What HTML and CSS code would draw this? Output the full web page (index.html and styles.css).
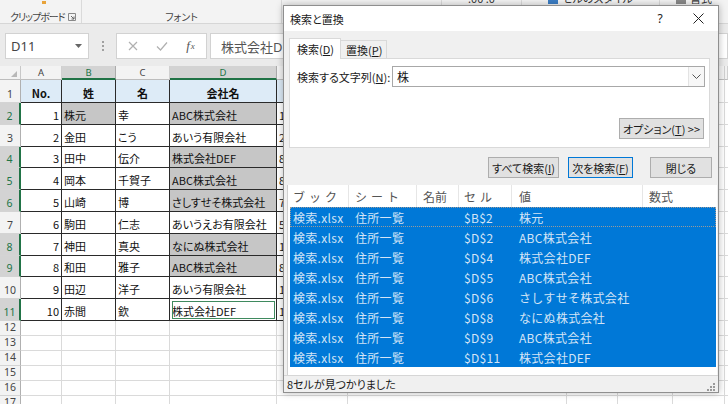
FILE: index.html
```html
<!DOCTYPE html>
<html lang="ja">
<head>
<meta charset="utf-8">
<title>検索と置換</title>
<link rel="stylesheet" href="styles.css">
</head>
<body>
<div class="app">
  <div class="ribbon">
    <div class="grp g-clip">
      <div class="cut-top"><span class="orange"></span></div>
      <div class="lbl-row"><span class="lbl narrow">クリップボード</span>
        <svg class="launch" width="8" height="8" viewBox="0 0 8 8"><path d="M0.5 0.5H7.5V7.5H0.5Z" fill="none" stroke="#888" stroke-width="1"/><path d="M3 3L6 6M6 3.5V6H3.5" fill="none" stroke="#666" stroke-width="1"/></svg>
      </div>
    </div>
    <div class="grp g-font"><div class="cut-top"></div><span class="lbl">フォント</span></div>
    <div class="grp g-align"><div class="cut-top"></div></div>
    <div class="grp g-num"><div class="cut-top cut-txt">.00 .0</div></div>
    <div class="grp g-style"><div class="cut-top cut-txt"><span class="blue-ico"></span>セルのスタイル</div></div>
    <div class="grp g-cells"><div class="cut-top cut-txt"><span class="gray-ico"></span>書式</div></div>
  </div>

  <div class="fbar">
    <div class="namebox"><span>D11</span>
      <svg width="7" height="4" viewBox="0 0 7 4"><path d="M0 0H7L3.5 4Z" fill="#666"/></svg>
    </div>
    <div class="dots"><i></i><i></i><i></i></div>
    <div class="fxbox">
      <span class="fxi"><svg width="10" height="10" viewBox="0 0 10 10"><path d="M1 1L9 9M9 1L1 9" stroke="#b0b0b0" stroke-width="1.2"/></svg></span>
      <span class="fxi"><svg width="12" height="10" viewBox="0 0 12 10"><path d="M1 5.5L4.5 9L11 1.5" stroke="#b0b0b0" stroke-width="1.2" fill="none"/></svg></span>
      <span class="fxi fx"><i>f</i><small>x</small></span>
    </div>
    <div class="finput">株式会社DEF</div>
  </div>

  <div class="sheet">
    <div class="row colhdr">
      <div class="corner w0"><svg width="6" height="6" viewBox="0 0 6 6"><path d="M6 0V6H0Z" fill="#b8b8b8"/></svg></div>
      <div class="chc wa">A</div>
      <div class="chc wb sel">B</div>
      <div class="chc wc">C</div>
      <div class="chc wd sel">D</div>
      <div class="chc we"></div>
      <div class="chc wf"></div>
      <div class="chc wg"></div>
      <div class="chc wh"></div>
      <div class="chc wi"></div>
      <div class="chc wj"></div>
    </div>

    <div class="row r1">
      <div class="rh w0">1</div>
      <div class="c wa d hd">No.</div>
      <div class="c wb d hd">姓</div>
      <div class="c wc d hd">名</div>
      <div class="c wd d hd">会社名</div>
      <div class="c we d hd"></div>
      <div class="c wf"></div><div class="c wg"></div><div class="c wh"></div><div class="c wi"></div><div class="c wj"></div>
    </div>
    <div class="row rd">
      <div class="rh w0 on">2</div>
      <div class="c wa d num">1</div>
      <div class="c wb d g">株元</div>
      <div class="c wc d">幸</div>
      <div class="c wd d g">ABC株式会社</div>
      <div class="c we d">1</div>
      <div class="c wf"></div><div class="c wg"></div><div class="c wh"></div><div class="c wi"></div><div class="c wj"></div>
    </div>
    <div class="row rd">
      <div class="rh w0">3</div>
      <div class="c wa d num">2</div>
      <div class="c wb d">金田</div>
      <div class="c wc d">こう</div>
      <div class="c wd d">あいう有限会社</div>
      <div class="c we d">2</div>
      <div class="c wf"></div><div class="c wg"></div><div class="c wh"></div><div class="c wi"></div><div class="c wj"></div>
    </div>
    <div class="row rd">
      <div class="rh w0 on">4</div>
      <div class="c wa d num">3</div>
      <div class="c wb d">田中</div>
      <div class="c wc d">伝介</div>
      <div class="c wd d g">株式会社DEF</div>
      <div class="c we d">8</div>
      <div class="c wf"></div><div class="c wg"></div><div class="c wh"></div><div class="c wi"></div><div class="c wj"></div>
    </div>
    <div class="row rd">
      <div class="rh w0 on">5</div>
      <div class="c wa d num">4</div>
      <div class="c wb d">岡本</div>
      <div class="c wc d">千賀子</div>
      <div class="c wd d g">ABC株式会社</div>
      <div class="c we d">8</div>
      <div class="c wf"></div><div class="c wg"></div><div class="c wh"></div><div class="c wi"></div><div class="c wj"></div>
    </div>
    <div class="row rd">
      <div class="rh w0 on">6</div>
      <div class="c wa d num">5</div>
      <div class="c wb d">山崎</div>
      <div class="c wc d">博</div>
      <div class="c wd d g">さしすせそ株式会社</div>
      <div class="c we d">7</div>
      <div class="c wf"></div><div class="c wg"></div><div class="c wh"></div><div class="c wi"></div><div class="c wj"></div>
    </div>
    <div class="row rd">
      <div class="rh w0">7</div>
      <div class="c wa d num">6</div>
      <div class="c wb d">駒田</div>
      <div class="c wc d">仁志</div>
      <div class="c wd d">あいうえお有限会社</div>
      <div class="c we d">5</div>
      <div class="c wf"></div><div class="c wg"></div><div class="c wh"></div><div class="c wi"></div><div class="c wj"></div>
    </div>
    <div class="row rd">
      <div class="rh w0 on">8</div>
      <div class="c wa d num">7</div>
      <div class="c wb d">神田</div>
      <div class="c wc d">真央</div>
      <div class="c wd d g">なにぬ株式会社</div>
      <div class="c we d">1</div>
      <div class="c wf"></div><div class="c wg"></div><div class="c wh"></div><div class="c wi"></div><div class="c wj"></div>
    </div>
    <div class="row rd">
      <div class="rh w0 on">9</div>
      <div class="c wa d num">8</div>
      <div class="c wb d">和田</div>
      <div class="c wc d">雅子</div>
      <div class="c wd d g">ABC株式会社</div>
      <div class="c we d">8</div>
      <div class="c wf"></div><div class="c wg"></div><div class="c wh"></div><div class="c wi"></div><div class="c wj"></div>
    </div>
    <div class="row rd">
      <div class="rh w0">10</div>
      <div class="c wa d num">9</div>
      <div class="c wb d">田辺</div>
      <div class="c wc d">洋子</div>
      <div class="c wd d">あいう有限会社</div>
      <div class="c we d">1</div>
      <div class="c wf"></div><div class="c wg"></div><div class="c wh"></div><div class="c wi"></div><div class="c wj"></div>
    </div>
    <div class="row rd">
      <div class="rh w0 on">11</div>
      <div class="c wa d num">10</div>
      <div class="c wb d">赤間</div>
      <div class="c wc d">欽</div>
      <div class="c wd d act">株式会社DEF</div>
      <div class="c we d">1</div>
      <div class="c wf"></div><div class="c wg"></div><div class="c wh"></div><div class="c wi"></div><div class="c wj"></div>
    </div>
    <div class="row re"><div class="rh w0">12</div><div class="c wa"></div><div class="c wb"></div><div class="c wc"></div><div class="c wd"></div><div class="c we"></div><div class="c wf"></div><div class="c wg"></div><div class="c wh"></div><div class="c wi"></div><div class="c wj"></div></div>
    <div class="row re"><div class="rh w0">13</div><div class="c wa"></div><div class="c wb"></div><div class="c wc"></div><div class="c wd"></div><div class="c we"></div><div class="c wf"></div><div class="c wg"></div><div class="c wh"></div><div class="c wi"></div><div class="c wj"></div></div>
    <div class="row re"><div class="rh w0">14</div><div class="c wa"></div><div class="c wb"></div><div class="c wc"></div><div class="c wd"></div><div class="c we"></div><div class="c wf"></div><div class="c wg"></div><div class="c wh"></div><div class="c wi"></div><div class="c wj"></div></div>
    <div class="row re"><div class="rh w0">15</div><div class="c wa"></div><div class="c wb"></div><div class="c wc"></div><div class="c wd"></div><div class="c we"></div><div class="c wf"></div><div class="c wg"></div><div class="c wh"></div><div class="c wi"></div><div class="c wj"></div></div>
    <div class="row re"><div class="rh w0">16</div><div class="c wa"></div><div class="c wb"></div><div class="c wc"></div><div class="c wd"></div><div class="c we"></div><div class="c wf"></div><div class="c wg"></div><div class="c wh"></div><div class="c wi"></div><div class="c wj"></div></div>
    <div class="row re"><div class="rh w0">17</div><div class="c wa"></div><div class="c wb"></div><div class="c wc"></div><div class="c wd"></div><div class="c we"></div><div class="c wf"></div><div class="c wg"></div><div class="c wh"></div><div class="c wi"></div><div class="c wj"></div></div>
  </div>

  <div class="dialog">
    <div class="titlebar">
      <span class="title">検索と置換</span>
      <span class="tb-btn help">?</span>
      <span class="tb-btn close"><svg width="11" height="11" viewBox="0 0 11 11"><path d="M0.5 0.5L10.5 10.5M10.5 0.5L0.5 10.5" stroke="#222" stroke-width="1"/></svg></span>
    </div>
    <div class="dlg-body">
      <div class="tabs">
        <div class="tab on">検索(<u>D</u>)</div>
        <div class="tab">置換(<u>P</u>)</div>
      </div>
      <div class="panel">
        <div class="find-row">
          <span class="flabel">検索する文字列(<u>N</u>):</span>
          <div class="combo"><span class="ctext">株</span>
            <span class="drop"><svg width="9" height="5" viewBox="0 0 9 5"><path d="M0.5 0.5L4.5 4.5L8.5 0.5" stroke="#555" stroke-width="1" fill="none"/></svg></span>
          </div>
        </div>
        <div class="opt-row"><span class="btn opt">オプション(<u>T</u>) &gt;&gt;</span></div>
      </div>
      <div class="btn-row">
        <span class="btn b-all">すべて検索(<u>I</u>)</span>
        <span class="btn b-next">次を検索(<u>F</u>)</span>
        <span class="btn b-close">閉じる</span>
      </div>
      <div class="results">
        <div class="res-head">
          <span class="rc c1 sp">ブック</span>
          <span class="rc c2 sp">シート</span>
          <span class="rc c3">名前</span>
          <span class="rc c4 sp">セル</span>
          <span class="rc c5">値</span>
          <span class="rc c6">数式</span>
        </div>
        <div class="res-row focus"><span class="rc c1">検索.xlsx</span><span class="rc c2">住所一覧</span><span class="rc c3"></span><span class="rc c4">$B$2</span><span class="rc c5">株元</span><span class="rc c6"></span></div>
        <div class="res-row"><span class="rc c1">検索.xlsx</span><span class="rc c2">住所一覧</span><span class="rc c3"></span><span class="rc c4">$D$2</span><span class="rc c5">ABC株式会社</span><span class="rc c6"></span></div>
        <div class="res-row"><span class="rc c1">検索.xlsx</span><span class="rc c2">住所一覧</span><span class="rc c3"></span><span class="rc c4">$D$4</span><span class="rc c5">株式会社DEF</span><span class="rc c6"></span></div>
        <div class="res-row"><span class="rc c1">検索.xlsx</span><span class="rc c2">住所一覧</span><span class="rc c3"></span><span class="rc c4">$D$5</span><span class="rc c5">ABC株式会社</span><span class="rc c6"></span></div>
        <div class="res-row"><span class="rc c1">検索.xlsx</span><span class="rc c2">住所一覧</span><span class="rc c3"></span><span class="rc c4">$D$6</span><span class="rc c5">さしすせそ株式会社</span><span class="rc c6"></span></div>
        <div class="res-row"><span class="rc c1">検索.xlsx</span><span class="rc c2">住所一覧</span><span class="rc c3"></span><span class="rc c4">$D$8</span><span class="rc c5">なにぬ株式会社</span><span class="rc c6"></span></div>
        <div class="res-row"><span class="rc c1">検索.xlsx</span><span class="rc c2">住所一覧</span><span class="rc c3"></span><span class="rc c4">$D$9</span><span class="rc c5">ABC株式会社</span><span class="rc c6"></span></div>
        <div class="res-row"><span class="rc c1">検索.xlsx</span><span class="rc c2">住所一覧</span><span class="rc c3"></span><span class="rc c4">$D$11</span><span class="rc c5">株式会社DEF</span><span class="rc c6"></span></div>
      </div>
    </div>
    <div class="status">
      <span>8セルが見つかりました</span>
      <svg class="grip" width="9" height="9" viewBox="0 0 9 9"><g fill="#9a9a9a"><rect x="7" y="1" width="2" height="2"/><rect x="4" y="4" width="2" height="2"/><rect x="7" y="4" width="2" height="2"/><rect x="1" y="7" width="2" height="2"/><rect x="4" y="7" width="2" height="2"/><rect x="7" y="7" width="2" height="2"/></g></svg>
    </div>
  </div>
</div>
</body>
</html>
```

FILE: styles.css
```css
* { box-sizing: border-box; }
html, body { margin: 0; padding: 0; }
body {
  width: 728px; height: 404px; overflow: hidden; background: #fff;
  font-family: "Noto Sans", "Noto Sans CJK JP", sans-serif;
}
.app { position: relative; width: 728px; height: 404px; overflow: hidden; }

/* Ribbon */
.ribbon { display: flex; height: 24px; background: #f3f3f3; border-bottom: 1px solid #d6d6d6; }
.grp {
  height: 23px; border-right: 1px solid #dadada; display: flex; flex-direction: column;
  justify-content: space-between; align-items: center;
  font-family: "Noto Sans CJK JP", sans-serif; font-feature-settings: "palt";
  font-size: 10px; line-height: 12px; color: #444; white-space: nowrap;
}
.cut-top { height: 4px; overflow: hidden; display: flex; align-items: flex-end; gap: 4px; }
.cut-txt { font-size: 11px; line-height: 12px; margin-top: -8px; height: 12px; color: #333; }
.orange { display: block; width: 4px; height: 3px; background: #e8a33a; margin-left: 42px; }
.blue-ico { display: inline-block; width: 10px; height: 10px; background: #3b7dc4; }
.gray-ico { display: inline-block; width: 10px; height: 10px; background: #888; }
.g-clip { width: 82px; align-items: stretch; }
.g-clip .cut-top { justify-content: flex-start; }
.lbl-row { display: flex; align-items: center; justify-content: space-between; padding: 0 5px 0 10px; height: 12px; }
.lbl { white-space: nowrap; }
.lbl.narrow { letter-spacing: -1px; }
.launch { display: block; flex: none; }
.g-font { width: 200px; }
.g-align { width: 160px; }
.g-num { width: 80px; }
.g-style { width: 138px; }
.g-cells { flex: 1; border-right: none; }

/* Formula bar */
.fbar { display: flex; align-items: flex-start; height: 42px; padding-top: 9px; background: #ebebeb; }
.namebox {
  margin-left: 5px; width: 84px; height: 26px; background: #fff; border: 1px solid #d2d2d2;
  display: flex; align-items: center; justify-content: space-between; padding: 0 6px 0 5px;
  font-size: 13px; color: #444;
}
.dots { width: 27px; height: 26px; display: flex; flex-direction: column; align-items: center; justify-content: center; gap: 2px; }
.dots i { display: block; width: 2px; height: 2px; background: #a0a0a0; }
.fxbox { width: 91px; height: 26px; background: #fff; border: 1px solid #d2d2d2; display: flex; align-items: center; padding-left: 1px; }
.fxi { width: 29px; display: flex; justify-content: center; align-items: center; }
.fx { font-family: "Liberation Serif", serif; font-size: 13px; color: #555; }
.fx small { font-size: 9px; font-style: italic; margin-left: 1px; }
.finput {
  flex: 1; margin-left: 3px; height: 26px; background: #fff; border: 1px solid #d2d2d2;
  display: flex; align-items: center; padding-left: 10px;
  font-family: "Noto Sans", "Noto Sans CJK JP", sans-serif; font-size: 13px; color: #555;
}

/* Sheet */
.sheet { font-family: "Noto Sans CJK JP", sans-serif; font-feature-settings: "palt"; }
.row { display: flex; }
.w0 { width: 21px; flex: none; }
.wa { width: 41px; flex: none; }
.wb { width: 54px; flex: none; }
.wc { width: 54px; flex: none; }
.wd { width: 107px; flex: none; }
.we { width: 71px; flex: none; }
.wf { width: 219px; flex: none; }
.wg { width: 51px; flex: none; }
.wh { width: 55px; flex: none; }
.wi { width: 52px; flex: none; }
.wj { flex: 1; }

.colhdr { height: 14px; background: #f3f3f3; }
.corner { display: flex; align-items: flex-end; justify-content: flex-end; padding: 0 3px 2px 0; border-right: 1px solid #c8c8c8; border-bottom: 1px solid #bdbdbd; }
.chc {
  border-right: 1px solid #d0d0d0; border-bottom: 1px solid #bdbdbd;
  font-family: "Noto Sans", sans-serif; font-size: 9.5px; line-height: 13px; text-align: center; color: #444;
}
.chc.sel { background: #d3d3d3; color: #217346; border-bottom: 2px solid #217346; border-right-color: #ababab; }

.r1 { height: 23px; }
.rd { height: 21.8px; }
.re { height: 15px; }

.rh {
  background: #f3f3f3; border-right: 1px solid #b0b0b0; border-bottom: 1px solid #d4d4d4;
  display: flex; align-items: flex-end; justify-content: center; padding-bottom: 1px;
  font-family: "Noto Sans", sans-serif; font-size: 10.5px; line-height: 13px; color: #444;
}
.re .rh { align-items: center; padding-bottom: 0; }
.rh.on { background: #d3d3d3; color: #217346; border-right: 2px solid #217346; }

.c {
  border-right: 1px solid #dadada; border-bottom: 1px solid #dadada;
  display: flex; align-items: flex-end; padding: 0 2px 2px 2px;
  font-size: 11px; line-height: 13px; color: #111; white-space: nowrap; overflow: hidden;
}
.c.d { border-right-color: #2a2a2a; border-bottom-color: #2a2a2a; }
.c.hd { background: #ddebf7; font-weight: bold; justify-content: center; }
.c.num { justify-content: flex-end; }
.c.g { background: #c6c6c6; }
.c.act { outline: 1px solid #3f8a5e; outline-offset: -3px; }

/* Dialog */
.dialog {
  position: absolute; left: 283px; top: 5px; width: 436px; height: 388px;
  border: 1px solid #8f8f8f; background: #f0f0f0;
  box-shadow: 0 0 7px rgba(0, 0, 0, 0.28);
  display: flex; flex-direction: column;
  font-family: "Noto Sans CJK JP", sans-serif; font-feature-settings: "palt";
  font-size: 11px; color: #1a1a1a;
}
.titlebar { height: 25px; flex: none; background: #fff; display: flex; align-items: center; padding-left: 6px; }
.title { font-size: 11px; }
.tb-btn { width: 38px; height: 25px; display: flex; align-items: center; justify-content: center; }
.tb-btn.help { margin-left: auto; font-family: "Noto Sans", sans-serif; font-size: 12px; }
.tb-btn.close { width: 39px; }

.dlg-body { flex: 1; padding-top: 7px; display: flex; flex-direction: column; }
.tabs { display: flex; align-items: flex-end; height: 21px; margin: 0 0 -1px 5px; position: relative; z-index: 1; }
.tab {
  width: 46px; height: 18px; border: 1px solid #d9d9d9; border-left: none; border-bottom: none;
  background: #f0f0f0; padding-left: 5px; display: flex; align-items: center; margin-bottom: 1px;
}
.tab.on { width: 52px; height: 21px; background: #fff; border-left: 1px solid #d9d9d9; padding-left: 7px; margin-bottom: 0; }

.panel {
  height: 90px; margin: 0 8px 0 5px; background: #fff; border: 1px solid #d9d9d9;
  padding: 7px 4px 8px 7px; display: flex; flex-direction: column; justify-content: space-between;
}
.find-row { display: flex; align-items: center; height: 21px; }
.flabel { flex: 0 0 95px; }
.combo { flex: 1; height: 21px; border: 1px solid #a8a8a8; display: flex; align-items: center; padding-left: 4px; }
.ctext { font-size: 12px; }
.drop {
  margin-left: auto; width: 16px; height: 19px; border-left: 1px solid #e3e3e3; background: #f7f7f7;
  display: flex; align-items: center; justify-content: center;
}
.opt-row { display: flex; justify-content: flex-end; padding-right: 1px; }
.btn {
  height: 21px; background: #e1e1e1; border: 1px solid #adadad;
  display: flex; align-items: center; justify-content: center; white-space: nowrap;
}
.opt { width: 85px; }
.btn-row { display: flex; justify-content: flex-end; margin: 9px 6px 0 0; height: 21px; }
.b-all { width: 71px; }
.b-next { width: 65px; margin-left: 9px; border-color: #0078d7; }
.b-close { width: 62px; margin-left: 17px; }

.results {
  height: 190px; margin: 7px 1px 0 3px; background: #fff; padding: 0 1px 0 2px;
  border-left: 1px solid #d0d0d0;
  font-family: "Noto Sans CJK JP", sans-serif; font-feature-settings: normal; font-size: 12px;
}
.res-head, .res-row { display: grid; grid-template-columns: 59px 68px 42px 53px 131px 1fr; }
.res-head { height: 22px; align-items: center; color: #555; }
.res-head .rc { border-right: 1px solid #e6e6e6; height: 22px; display: flex; align-items: center; }
.res-head .c6 { border-right: none; }
.sp { letter-spacing: 4px; }
.rc { padding-left: 6px; white-space: nowrap; overflow: hidden; }
.rc.c1 { padding-left: 3px; }
.rc.c4 { padding-left: 5px; }
.rc.c5 { padding-left: 7px; }
.res-row { height: 20px; align-items: center; background: #0078d7; color: #d3e4f6; letter-spacing: 0.3px; }
.res-row.focus { outline: 1px dotted #9a9a9a; outline-offset: -1px; }

.status {
  height: 17px; flex: none; border-top: 1px solid #d6d6d6; background: #f0f0f0;
  display: flex; align-items: center; justify-content: space-between; padding: 0 3px 0 3px;
  font-size: 11px; color: #1a1a1a;
}
.grip { align-self: flex-end; margin-bottom: 1px; }
```
